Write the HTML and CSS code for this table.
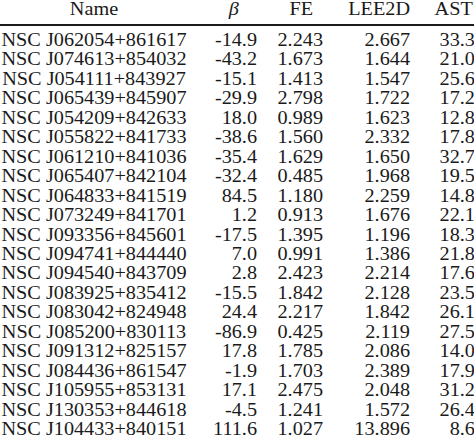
FILE: index.html
```html
<!DOCTYPE html>
<html>
<head>
<meta charset="utf-8">
<link rel="stylesheet" href="styles.css">
</head>
<body>
<div class="table">
  <div class="row head">
    <div class="c name">Name</div>
    <div class="c h2"><i>β</i></div>
    <div class="c h3">FE</div>
    <div class="c h4">LEE2D</div>
    <div class="c h5">AST</div>
  </div>
  <div class="body">
    <div class="row"><div class="c name">NSC J062054+861617</div><div class="c num">-14.9</div><div class="c num">2.243</div><div class="c num">2.667</div><div class="c num">33.3</div></div>
    <div class="row"><div class="c name">NSC J074613+854032</div><div class="c num">-43.2</div><div class="c num">1.673</div><div class="c num">1.644</div><div class="c num">21.0</div></div>
    <div class="row"><div class="c name">NSC J054111+843927</div><div class="c num">-15.1</div><div class="c num">1.413</div><div class="c num">1.547</div><div class="c num">25.6</div></div>
    <div class="row"><div class="c name">NSC J065439+845907</div><div class="c num">-29.9</div><div class="c num">2.798</div><div class="c num">1.722</div><div class="c num">17.2</div></div>
    <div class="row"><div class="c name">NSC J054209+842633</div><div class="c num">18.0</div><div class="c num">0.989</div><div class="c num">1.623</div><div class="c num">12.8</div></div>
    <div class="row"><div class="c name">NSC J055822+841733</div><div class="c num">-38.6</div><div class="c num">1.560</div><div class="c num">2.332</div><div class="c num">17.8</div></div>
    <div class="row"><div class="c name">NSC J061210+841036</div><div class="c num">-35.4</div><div class="c num">1.629</div><div class="c num">1.650</div><div class="c num">32.7</div></div>
    <div class="row"><div class="c name">NSC J065407+842104</div><div class="c num">-32.4</div><div class="c num">0.485</div><div class="c num">1.968</div><div class="c num">19.5</div></div>
    <div class="row"><div class="c name">NSC J064833+841519</div><div class="c num">84.5</div><div class="c num">1.180</div><div class="c num">2.259</div><div class="c num">14.8</div></div>
    <div class="row"><div class="c name">NSC J073249+841701</div><div class="c num">1.2</div><div class="c num">0.913</div><div class="c num">1.676</div><div class="c num">22.1</div></div>
    <div class="row"><div class="c name">NSC J093356+845601</div><div class="c num">-17.5</div><div class="c num">1.395</div><div class="c num">1.196</div><div class="c num">18.3</div></div>
    <div class="row"><div class="c name">NSC J094741+844440</div><div class="c num">7.0</div><div class="c num">0.991</div><div class="c num">1.386</div><div class="c num">21.8</div></div>
    <div class="row"><div class="c name">NSC J094540+843709</div><div class="c num">2.8</div><div class="c num">2.423</div><div class="c num">2.214</div><div class="c num">17.6</div></div>
    <div class="row"><div class="c name">NSC J083925+835412</div><div class="c num">-15.5</div><div class="c num">1.842</div><div class="c num">2.128</div><div class="c num">23.5</div></div>
    <div class="row"><div class="c name">NSC J083042+824948</div><div class="c num">24.4</div><div class="c num">2.217</div><div class="c num">1.842</div><div class="c num">26.1</div></div>
    <div class="row"><div class="c name">NSC J085200+830113</div><div class="c num">-86.9</div><div class="c num">0.425</div><div class="c num">2.119</div><div class="c num">27.5</div></div>
    <div class="row"><div class="c name">NSC J091312+825157</div><div class="c num">17.8</div><div class="c num">1.785</div><div class="c num">2.086</div><div class="c num">14.0</div></div>
    <div class="row"><div class="c name">NSC J084436+861547</div><div class="c num">-1.9</div><div class="c num">1.703</div><div class="c num">2.389</div><div class="c num">17.9</div></div>
    <div class="row"><div class="c name">NSC J105955+853131</div><div class="c num">17.1</div><div class="c num">2.475</div><div class="c num">2.048</div><div class="c num">31.2</div></div>
    <div class="row"><div class="c name">NSC J130353+844618</div><div class="c num">-4.5</div><div class="c num">1.241</div><div class="c num">1.572</div><div class="c num">26.4</div></div>
    <div class="row"><div class="c name">NSC J104433+840151</div><div class="c num">111.6</div><div class="c num">1.027</div><div class="c num">13.896</div><div class="c num">8.6</div></div>
  </div>
</div>
</body>
</html>
```
FILE: styles.css
```css
html, body {
  margin: 0;
  padding: 0;
  background: #ffffff;
}
body {
  width: 474px;
  height: 445px;
  overflow: hidden;
}
.table {
  font-family: "Liberation Serif", "Times New Roman", serif;
  font-size: 18px;
  line-height: 19.48px;
  color: #1a1a1a;
  width: 424px;
  transform: scaleX(1.124);
  transform-origin: 0 0;
}
.row {
  display: grid;
  grid-template-columns: 167.3px 61.4px 58.7px 77.4px 57.8px;
  white-space: nowrap;
}
.head {
  padding-bottom: 4.5px;
  border-bottom: 2px solid #1a1a1a;
}
.body {
  padding-top: 4.7px;
}
.c {
  text-align: right;
}
.name {
  text-align: center;
}
.h2, .h3, .h5 {
  text-align: center;
  padding-left: 20px;
}
.h4 {
  text-align: right;
}
```
